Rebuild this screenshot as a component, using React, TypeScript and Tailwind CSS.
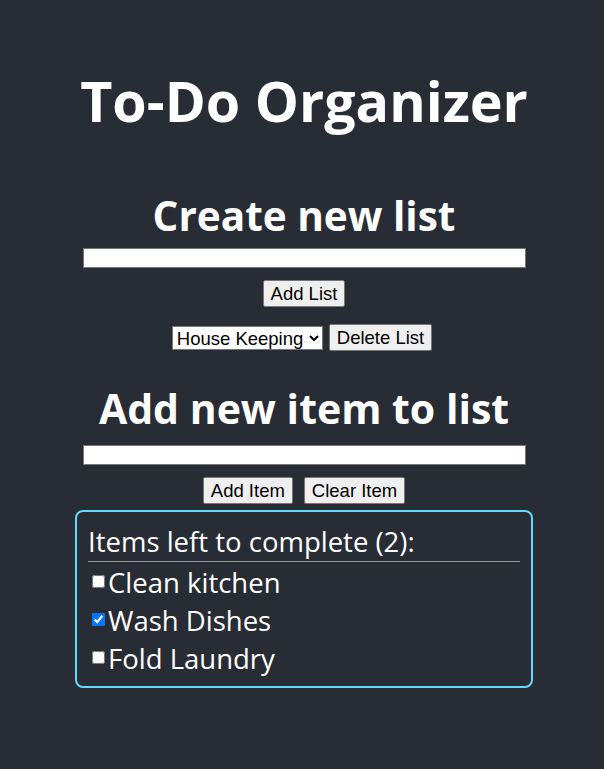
import React from "react";

const btn =
  "h-[27px] bg-[#efefef] border border-[#767676] rounded-[2px] text-black text-[18.5px] leading-[21px] px-[7px] [font-family:'Liberation_Sans',Arial,sans-serif]";

export default function App() {
  return (
    <div className="min-h-[769px] w-full bg-[#282c34] text-white [font-family:'Open_Sans','Noto_Sans',sans-serif] flex flex-col items-center pl-[4px]">
      <h1 className="mt-[63px] text-[55.6px] leading-[75px] font-bold">To-Do Organizer</h1>
      <h2 className="mt-[50px] text-[40.5px] leading-[56px] font-bold">Create new list</h2>
      <input
        type="text"
        className="mt-[4px] w-[443px] h-[20px] bg-white border border-[#767676]"
      />
      <button className={`mt-[12px] ${btn}`}>Add List</button>
      <div className="mt-[17px] flex items-center gap-[6px] -translate-x-[2px]">
        <select className="w-[151px] h-[24px] bg-white text-black border border-[#767676] text-[18.5px] [font-family:'Liberation_Sans',Arial,sans-serif]">
          <option>House Keeping</option>
        </select>
        <button className={btn}>Delete List</button>
      </div>
      <h2 className="mt-[29px] text-[41px] leading-[56px] font-bold">Add new item to list</h2>
      <input
        type="text"
        className="mt-[9px] w-[443px] h-[20px] bg-white border border-[#767676]"
      />
      <div className="mt-[12px] flex items-center gap-[11px]">
        <button className={btn}>Add Item</button>
        <button className={btn}>Clear Item</button>
      </div>
      <div className="mt-[6px] w-[458px] border-2 border-[#61dafb] rounded-[8px] px-[11px] pt-[11px] pb-[8px]">
        <div className="text-[27.5px] leading-[37px]">Items left to complete (2):</div>
        <div className="h-px bg-[#9a9a9a] mt-[1px]" />
        <ul className="mt-[2px] text-[27.5px] leading-[38px]">
          {[
            ["Clean kitchen", false],
            ["Wash Dishes", true],
            ["Fold Laundry", false],
          ].map(([t, c]) => (
            <li key={t as string} className="block">
              <input
                type="checkbox"
                defaultChecked={c as boolean}
                className="relative -top-[5px] inline-block align-baseline ml-[4px] mr-[3px] w-[13px] h-[13px] accent-[#0075ff]"
              />
              <span>{t as string}</span>
            </li>
          ))}
        </ul>
      </div>
    </div>
  );
}
